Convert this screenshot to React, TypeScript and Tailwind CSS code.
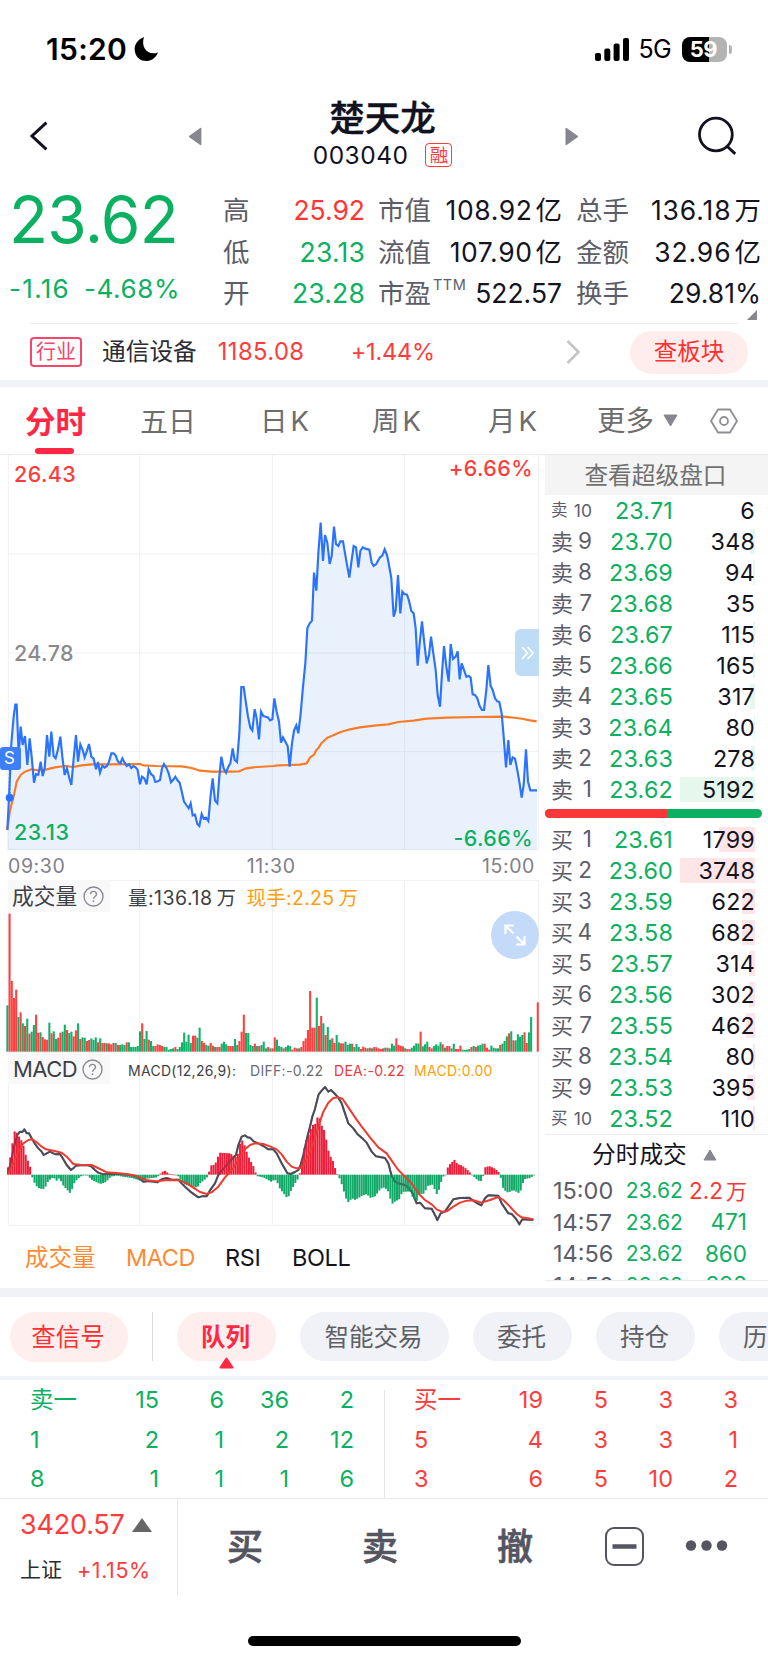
import React from "react";
import clsx from "clsx";

const MORNING_PRICE =
  "22,1140 27,1043 34,880 41,800 46,764 50,764 56,912 62,830 68,885 75,858 82,945 89,865 95,920 102,998 108,972 115,974 122,935 128,978 134,955 141,855 148,920 154,845 161,918 167,925 174,898 181,860 187,920 194,975 201,955 208,985 214,1005 221,925 228,855 234,935 241,883 248,900 254,922 261,902 267,882 274,920 281,926 288,958 294,936 300,968 307,947 314,953 321,948 327,935 334,910 341,910 347,917 354,935 361,940 367,925 374,938 380,948 387,943 394,954 400,948 407,952 413,960 420,1003 426,980 433,985 440,1003 446,958 453,972 460,978 466,996 473,994 480,990 486,955 492,942 499,953 506,970 513,997 519,990 526,980 532,990 539,998 546,1028 552,1055 559,1065 566,1075 572,1060 578,1096 585,1094 592,1122 598,1128 605,1092 611,1106 618,1103 625,1113 632,1035 638,985 645,1052 652,1060 658,980 664,920 671,955 678,968 685,950 691,940 698,895 704,930 711,936 718,850 724,711 731,711 738,760 744,800 751,833 757,841 764,778 770,805 777,868 783,785 790,798 797,800 804,802 810,811 817,808 823,745 830,785 837,815 843,878 849,862 856,875 863,888 869,950 876,880 882,842 889,826 895,850";
const AFTERNOON_PRICE =
  "902,790 909,710 916,640 922,535 929,520 936,512 942,368 949,422 955,310 962,218 969,333 975,255 982,278 989,342 995,318 1002,230 1008,282 1015,288 1021,274 1029,274 1035,310 1042,350 1048,383 1055,330 1061,288 1068,292 1075,352 1081,303 1088,292 1096,296 1108,299 1115,338 1121,348 1128,343 1140,322 1147,317 1154,298 1161,315 1167,345 1174,385 1181,500 1187,480 1194,375 1201,490 1207,425 1213,432 1221,434 1227,452 1234,483 1241,490 1247,535 1253,647 1260,570 1266,514 1273,580 1280,640 1287,615 1293,560 1300,610 1307,660 1313,735 1320,770 1326,670 1332,588 1339,650 1346,695 1352,582 1359,627 1367,620 1373,604 1379,688 1385,640 1392,660 1399,680 1406,678 1412,683 1418,733 1425,735 1432,745 1439,768 1446,780 1452,780 1459,720 1465,645 1472,708 1478,720 1485,745 1492,754 1498,756 1505,790 1511,860 1518,952 1525,870 1531,945 1538,922 1545,926 1551,955 1558,995 1565,1043 1571,1005 1578,898 1584,995 1591,1021 1611,1021";
const PRICE = `${MORNING_PRICE} ${AFTERNOON_PRICE}`;
const AVERAGE =
  "22,1140 30,1080 42,1035 50,995 62,975 75,965 95,958 115,961 140,958 165,952 195,948 220,951 245,946 275,943 330,943 420,942 430,946 470,948 545,949 575,954 600,962 635,965 690,965 718,964 735,956 760,952 820,948 835,946 870,945 900,944 920,940 930,923 942,914 949,900 956,893 964,880 982,863 1000,856 1020,847 1050,838 1080,832 1130,826 1165,823 1195,816 1240,812 1280,806 1340,803 1430,801 1510,800 1550,804 1570,807 1590,811 1610,814";

const VOLUME =
  "g139 r414 r212 r161 r186 g104 r118 g85 r77 g99 r54 g60 g80 r111 r57 g58 r44 r37 r36 g87 r55 g61 g38 r42 r57 g60 g81 r65 g56 g60 r46 r64 g85 r38 g43 g42 r32 r35 g40 g35 g43 r28 g40 r26 r26 g25 r25 r22 r26 g26 r20 g20 g22 g20 r28 g28 g14 g14 g14 g17 g61 r85 g38 g62 r36 g32 g17 r17 r22 r20 r17 g14 g14 g6 g8 g10 r14 g8 g14 g28 g57 g30 g51 g26 r48 r48 g42 g72 r32 r26 g20 g18 r26 r18 g14 r14 r14 g24 g30 g22 r17 r17 r17 g38 g20 r32 r60 r111 g56 g56 g20 g17 r24 g17 r17 g20 g30 g10 r14 g10 r10 r43 g36 g17 g14 r10 g14 g19 g17 r6 r12 r10 g10 r14 r32 r40 r65 r182 r72 r72 g162 r77 r107 g85 r50 g74 g36 r40 r26 g50 g28 r25 r25 g30 g20 g24 r24 g14 g23 g14 r8 r15 r12 g10 r12 g10 r14 r13 r10 r8 r10 g12 r12 g10 g24 g18 r40 r20 r18 r16 g10 r8 r8 g12 g18 g25 g24 r60 g16 g22 g30 r14 r10 g17 g22 g18 g28 r22 g12 r17 r17 g10 g24 r8 r8 r18 g6 g5 g6 g8 r14 g17 r14 g18 g20 g24 r24 r12 r6 g18 g12 g10 g10 r20 g24 g32 g46 r55 g61 r34 g34 g52 g45 g50 r58 r26 g58 g104 x0 x0 r148";

// x of the tick, value above or below the zero line
const MACD_BARS: [number, number][] = [
  [24, 22], [32, 58], [39, 106], [46, 140], [53, 118], [60, 112], [66, 98], [73, 80], [79, 50], [86, 38], [92, 18], [98, -14],
  [105, -27], [112, -38], [120, -42], [131, -43], [138, -34], [145, -18], [160, -8], [170, -18], [178, -10], [190, -33], [210, -55],
  [217, -42], [225, -20], [245, -3], [262, -2], [275, -15], [300, -28], [318, -22], [332, -6], [350, -3], [400, -11], [425, -20],
  [440, -12], [472, -8], [480, 2], [493, 13], [506, 3], [522, 0], [534, -4], [541, -14], [555, -30], [592, -39], [600, -26], [620, -10],
  [627, 8], [633, 28], [645, 30], [652, 50], [660, 66], [690, 64], [711, 50], [718, 85], [724, 108], [735, 85], [744, 56], [764, 18],
  [769, -4], [790, -8], [815, -22], [823, -14], [831, -20], [837, -38], [850, -55], [863, -72], [872, -50], [885, -26], [897, -8],
  [902, 20], [908, 62], [918, 100], [930, 130], [936, 150], [944, 148], [950, 165], [956, 183], [963, 148], [969, 145], [976, 120],
  [983, 82], [989, 56], [996, 50], [1002, 30], [1009, 8], [1015, -4], [1022, -18], [1030, -45], [1041, -80], [1048, -84], [1054, -70],
  [1066, -76], [1085, -64], [1101, -58], [1110, -70], [1125, -65], [1142, -42], [1154, -38], [1166, -52], [1173, -80], [1181, -92],
  [1187, -72], [1194, -82], [1207, -52], [1230, -50], [1240, -72], [1250, -80], [1258, -58], [1273, -57], [1282, -34], [1298, -30],
  [1311, -60], [1319, -40], [1326, -12], [1333, -1], [1338, 0], [1344, 24], [1352, 34], [1364, 45], [1372, 32], [1385, 28], [1400, 17],
  [1410, 6], [1420, -4], [1434, -18], [1446, -19], [1450, -2], [1455, 22], [1468, 26], [1485, 18], [1498, 6], [1505, -18], [1510, -44],
  [1524, -54], [1540, -46], [1558, -56], [1566, -40], [1571, -14], [1590, -10], [1602, -2],
];
const DIFF =
  "24,910 32,880 42,830 52,795 60,785 67,786 73,778 80,790 87,790 95,805 105,822 115,835 125,845 131,855 140,850 150,845 160,850 168,853 180,852 190,868 200,885 213,900 222,893 228,887 240,886 262,886 272,888 285,900 295,908 310,913 330,912 360,912 390,915 410,920 430,935 445,933 472,937 485,928 500,924 515,929 535,929 545,940 560,955 575,968 595,982 605,979 620,979 632,958 645,940 655,915 668,900 680,885 695,868 708,855 715,825 725,800 735,796 742,802 750,803 762,815 775,820 790,828 805,838 820,838 830,850 845,880 855,897 862,910 872,912 885,906 895,900 902,885 910,855 922,800 930,770 937,740 944,720 956,673 965,662 975,651 985,665 993,660 1005,672 1015,683 1025,700 1035,730 1045,760 1060,775 1072,792 1090,808 1100,818 1115,845 1128,859 1155,864 1165,880 1175,918 1185,935 1195,940 1215,945 1230,958 1238,970 1250,1000 1260,998 1275,1015 1295,1016 1305,1035 1312,1050 1322,1030 1335,1024 1345,1010 1360,988 1380,984 1407,983 1420,992 1432,1000 1444,1006 1455,985 1465,976 1495,977 1505,1000 1515,1015 1525,1030 1535,1032 1547,1045 1558,1063 1567,1048 1600,1050";
const DEA =
  "24,912 40,880 55,845 70,820 85,810 97,808 110,817 125,830 138,838 160,842 185,848 200,860 220,882 240,884 275,885 300,897 320,907 350,909 380,912 410,918 440,931 470,934 500,930 540,931 560,940 580,953 600,966 620,972 635,967 655,950 675,922 700,895 715,870 735,838 750,825 765,820 790,822 812,830 830,838 845,853 860,875 875,890 890,895 902,893 912,882 925,858 940,820 955,770 970,725 985,698 1000,684 1015,682 1028,687 1045,712 1065,742 1085,770 1110,802 1135,832 1160,850 1175,872 1195,900 1215,920 1235,940 1255,970 1275,990 1295,1003 1310,1018 1325,1025 1340,1024 1360,1010 1380,998 1400,992 1420,991 1445,998 1470,990 1495,981 1510,990 1530,1010 1550,1032 1565,1042 1600,1048";

const TICK = 6.63;

const macdAt = (x: number) => {
  for (let i = 1; i < MACD_BARS.length; i++) {
    const [x0, v0] = MACD_BARS[i - 1];
    const [x1, v1] = MACD_BARS[i];
    if (x <= x1) return v0 + ((v1 - v0) * (x - x0)) / (x1 - x0);
  }
  return 0;
};

const sells = [
  { label: "10", price: "23.71", vol: "6", bar: 0 },
  { label: "9", price: "23.70", vol: "348", bar: 5 },
  { label: "8", price: "23.69", vol: "94", bar: 2 },
  { label: "7", price: "23.68", vol: "35", bar: 0 },
  { label: "6", price: "23.67", vol: "115", bar: 2 },
  { label: "5", price: "23.66", vol: "165", bar: 2 },
  { label: "4", price: "23.65", vol: "317", bar: 5 },
  { label: "3", price: "23.64", vol: "80", bar: 1 },
  { label: "2", price: "23.63", vol: "278", bar: 4 },
  { label: "1", price: "23.62", vol: "5192", bar: 75 },
];

const buys = [
  { label: "1", price: "23.61", vol: "1799", bar: 36 },
  { label: "2", price: "23.60", vol: "3748", bar: 75 },
  { label: "3", price: "23.59", vol: "622", bar: 13 },
  { label: "4", price: "23.58", vol: "682", bar: 13 },
  { label: "5", price: "23.57", vol: "314", bar: 6 },
  { label: "6", price: "23.56", vol: "302", bar: 6 },
  { label: "7", price: "23.55", vol: "462", bar: 9 },
  { label: "8", price: "23.54", vol: "80", bar: 2 },
  { label: "9", price: "23.53", vol: "395", bar: 8 },
  { label: "10", price: "23.52", vol: "110", bar: 2 },
];

const trades = [
  { time: "15:00", price: "23.62", vol: "2.2", unit: "万", up: true },
  { time: "14:57", price: "23.62", vol: "471" },
  { time: "14:56", price: "23.62", vol: "860" },
  { time: "14:56", price: "23.62", vol: "892" },
];

const quoteRows = [
  { a: "高", av: "25.92", up: true, b: "市值", bv: "108.92", bu: "亿", c: "总手", cv: "136.18", cu: "万" },
  { a: "低", av: "23.13", b: "流值", bv: "107.90", bu: "亿", c: "金额", cv: "32.96", cu: "亿" },
  { a: "开", av: "23.28", b: "市盈", sup: "TTM", bv: "522.57", c: "换手", cv: "29.81%" },
];

const queueSell = [
  ["卖一", "15", "6", "36", "2"],
  ["1", "2", "1", "2", "12"],
  ["8", "1", "1", "1", "6"],
];
const queueBuy = [
  ["买一", "19", "5", "3", "3"],
  ["5", "4", "3", "3", "1"],
  ["3", "6", "5", "10", "2"],
];

function StatusBar() {
  return (
    <div className="flex h-[98px] items-center pl-[46px] pr-[36px] text-black">
      <span className="text-[30px] font-semibold tracking-[0.3px]">15:20</span>
      <svg className="ml-[7px]" width="25" height="26" viewBox="0 0 25 26">
        <path d="M10 1C3 4 0 9 .8 15 2 22 7 25.200 13 25c5-.3 9-3.500 11-8.500C14 20 6.500 12 10 1Z" fill="#000" />
      </svg>
      <div className="ml-auto flex items-center">
        <svg width="34" height="23" viewBox="0 0 34 23">
          <rect x="0" y="15" width="6" height="8" rx="2" />
          <rect x="9.300" y="10.500" width="6" height="12.500" rx="2" />
          <rect x="18.600" y="5.500" width="6" height="17.500" rx="2" />
          <rect x="28" y="0" width="6" height="23" rx="2" />
        </svg>
        <span className="ml-[10px] mt-[2px] text-[25px] tracking-[-0.7px]">5G</span>
        <div className="ml-[11px] flex h-[25px] w-[45px] items-center justify-center rounded-[8px] bg-[linear-gradient(90deg,#000_60%,#b3b3b3_60%)] pr-[2px] text-[22px] font-bold leading-none tracking-[-0.5px] text-white">
          59
        </div>
        <div className="ml-[2px] h-[9px] w-[3px] rounded-r-full bg-[#b3b3b3]" />
      </div>
    </div>
  );
}

function Header() {
  return (
    <div className="flex h-[92px] items-start px-[29px] text-[#11111f]">
      <svg className="mt-[22px]" width="20" height="32" viewBox="0 0 20 32" fill="none" stroke="#11111f" strokeWidth="3">
        <path d="M17.500 2.500 3 16l14.500 13.500" />
      </svg>
      <svg className="ml-[139px] mt-[29px]" width="14" height="19" viewBox="0 0 14 19">
        <path d="M13 1v17L1 9.500Z" fill="#86868e" stroke="#86868e" strokeLinejoin="round" />
      </svg>
      <div className="w-[366px] pr-[2px] text-center">
        <div className="text-[35.500px] font-medium leading-[42px] [-webkit-text-stroke:0.4px_#11111f]">楚天龙</div>
        <div className="mt-[1px] flex items-center justify-center leading-[28px]">
          <span className="text-[24.500px] tracking-[0.5px]">003040</span>
          <span className="ml-[17px] flex h-[24px] w-[27px] items-center justify-center rounded-[4px] border-[1.500px] border-[#ff3b3b] text-[18.500px] leading-none text-[#ff3b3b]">
            融
          </span>
        </div>
      </div>
      <svg className="mt-[29px]" width="14" height="19" viewBox="0 0 14 19">
        <path d="M1 1v17l12-8.500Z" fill="#86868e" stroke="#86868e" strokeLinejoin="round" />
      </svg>
      <svg className="ml-[118px] mt-[18px]" width="42" height="42" viewBox="0 0 42 42" fill="none" stroke="#11111f" strokeWidth="2.800">
        <circle cx="19" cy="18.500" r="16.500" />
        <path d="m30 30 8.500 8" />
      </svg>
    </div>
  );
}

function Quote() {
  return (
    <div className="relative flex h-[133px]">
      <div className="w-[223px] pl-[9px] text-[#0bb061]">
        <div className="mt-[-2px] text-[64px] leading-[64px] tracking-[-0.7px]">23.62</div>
        <div className="mt-[20px] flex gap-[14px] text-[26px] leading-[34px] tracking-[0.6px]">
          <span className="tracking-[1.300px]">-1.16</span>
          <span>-4.68%</span>
        </div>
      </div>
      <div>
        {quoteRows.map((r) => (
          <div key={r.a} className="grid h-[41.300px] w-[538px] grid-cols-[26px_116px_13px_54px_130px_14px_54px_131px] items-center text-[26.500px] leading-none">
            <span className="text-[#5d5d69]">{r.a}</span>
            <span className={clsx("text-right", r.up ? "text-[#ff3535]" : "text-[#0bb061] tracking-[0.2px]")}>{r.av}</span>
            <span />
            <span className="relative whitespace-nowrap text-[#5d5d69]">
              {r.b}
              {r.sup && <span className="absolute left-[55px] top-[-2px] text-[14.500px] tracking-[0.5px]">{r.sup}</span>}
            </span>
            <span className={clsx("whitespace-nowrap text-right text-[#14141f]", r.bu && "tracking-[0.6px]")}>
              {r.bv}
              {r.bu && <span className="ml-[3px] tracking-normal">{r.bu}</span>}
            </span>
            <span />
            <span className="whitespace-nowrap text-[#5d5d69]">{r.c}</span>
            <span className={clsx("whitespace-nowrap text-right text-[#14141f]", r.cu && "tracking-[0.9px]")}>
              {r.cv}
              {r.cu && <span className="ml-[3px] tracking-normal">{r.cu}</span>}
            </span>
          </div>
        ))}
      </div>
      <svg className="absolute bottom-[3px] right-[11px]" width="10" height="10">
        <path d="M10 0v10H0Z" fill="#86868e" />
      </svg>
    </div>
  );
}

function Industry() {
  return (
    <div className="mx-[30px] flex h-[57px] items-center border-t border-[#ececef]">
      <span className="flex h-[30px] w-[52px] items-center justify-center rounded-[4px] border-2 border-[#f5466b] text-[20px] leading-none text-[#f5466b]">
        行业
      </span>
      <span className="ml-[20px] text-[23.700px] text-[#2b2b33]">通信设备</span>
      <span className="ml-[21px] w-[133px] text-[23.800px] tracking-[0.4px] text-[#ff3b3b]">1185.08</span>
      <span className="text-[23.500px] tracking-[-0.2px] text-[#ff3b3b]">+1.44%</span>
      <svg className="ml-auto mr-[50px]" width="14" height="24" viewBox="0 0 14 24" fill="none" stroke="#c2c2c6" strokeWidth="2.500">
        <path d="m1.500 1 11 11-11 11" />
      </svg>
      <span className="mr-[-10px] flex h-[43px] w-[118px] items-center justify-center rounded-full bg-[#ffeded] text-[23.500px] text-[#ff3030]">
        查板块
      </span>
    </div>
  );
}

function PeriodTabs() {
  return (
    <div className="flex h-[68px] items-center border-b border-[#e9e9eb] text-[27.500px] text-[#6d6d6d]">
      <div className="relative ml-[25px] flex h-full w-[115px] items-center pt-[2px] text-[30.500px] font-bold text-[#ff2743]">
        分时
        <span className="absolute bottom-0 left-[10px] h-[6px] w-[39px] rounded-full bg-[#ff2743]" />
      </div>
      <span className="w-[120px] pt-[2px] text-[28px]">五日</span>
      <span className="w-[112px] pt-[2px]">日<span className="ml-[3px]">K</span></span>
      <span className="w-[116px] pt-[2px]">周<span className="ml-[3px]">K</span></span>
      <span className="w-[109px] pt-[2px]">月<span className="ml-[3px]">K</span></span>
      <span className="pt-[2px] text-[28.500px]">更多</span>
      <svg className="ml-[9px]" width="15" height="13" viewBox="0 0 15 13">
        <path d="M1 1h13L7.500 12Z" fill="#86868e" stroke="#86868e" strokeLinejoin="round" />
      </svg>
      <svg className="ml-[32px]" width="28" height="28" viewBox="0 0 28 28" fill="none" stroke="#8e8e94" strokeWidth="1.800">
        <path d="M8 2.500h12L27 14l-7 11.500H8L1 14Z" strokeLinejoin="round" />
        <circle cx="14" cy="14" r="4" />
      </svg>
    </div>
  );
}

function Grid({ top, bottom, rows }: { top: number; bottom: number; rows: number[] }) {
  return (
    <g stroke="#f1f1f3" strokeWidth="3">
      {[25, 418, 817, 1213, 1615].map((x) => (
        <path key={x} d={`M${x} ${top}V${bottom}`} />
      ))}
      {rows.map((y) => (
        <path key={y} d={`M24 ${y}H1616`} />
      ))}
    </g>
  );
}

function PriceChart() {
  return (
    <div className="relative h-[395px]">
      <svg className="absolute inset-0" width="540" height="395" viewBox="0 15 1620 1185" fill="none">
        <Grid top={15} bottom={1200} rows={[312, 609, 905, 1199]} />
        <polygon points={`${PRICE} 1611,1200 22,1200`} fill="#2b73f0" fillOpacity="0.1" />
        <polyline points={AVERAGE} stroke="#fb7a26" strokeWidth="6.500" strokeLinejoin="round" />
        <polyline points={PRICE} stroke="#2b73ff" strokeWidth="6.500" strokeLinejoin="miter" />
        <path d="M29 960v80" stroke="#2b73ff" strokeWidth="5" strokeDasharray="5 6" />
        <circle cx="29" cy="1043" r="12" fill="#2b73ff" />
      </svg>
      <div className="absolute inset-0 flex justify-between pl-[14px] pr-[7px] text-[21.500px] font-[450] leading-[26px] tracking-[0.4px]">
        <div className="flex flex-col justify-between pb-[5px] pt-[6px]">
          <span className="text-[#ff3b3b]">26.43</span>
          <span className="text-[#8a8a8a]">24.78</span>
          <span className="text-[#0bb061]">23.13</span>
        </div>
        <div className="flex flex-col items-end justify-between">
          <span className="text-[#ff3b3b]">+6.66%</span>
          <span className="mb-[-1px] text-[#0bb061]">-6.66%</span>
        </div>
      </div>
      <span className="absolute left-0 top-[292px] flex h-[23px] w-[21px] items-center justify-center rounded-[3px] bg-[#3c7ff6] pr-[2px] text-[17px] leading-none text-white">
        S
      </span>
      <span className="absolute left-[515px] top-[174px] flex h-[47px] w-[24px] items-center justify-center rounded-l-[6px] bg-[#bfdcf6]">
        <svg width="13" height="14" viewBox="0 0 13 14" fill="none" stroke="#fff" strokeWidth="1.700">
          <path d="m1 1 5.500 6L1 13M6.500 1l5.500 6-5.500 6" />
        </svg>
      </span>
    </div>
  );
}

function Help() {
  return (
    <svg width="21" height="21" viewBox="0 0 21 21" fill="none" stroke="#8b8b95" strokeWidth="1.400">
      <circle cx="10.500" cy="10.500" r="9.500" />
      <path d="M7.500 8.300c0-3.900 6-3.900 6 0 0 2.200-3 2.300-3 4.500M10.500 14.300v1.800" />
    </svg>
  );
}

function VolumeChart() {
  return (
    <div className="relative h-[174px]">
      <svg className="absolute inset-0" width="540" height="174" viewBox="0 30 1620 522">
        <Grid top={31} bottom={552} rows={[31, 547]} />
        {VOLUME.split(" ").map((v, i) => {
          const h = Number(v.slice(1));
          return (
            <rect key={i} x={19 + i * TICK} y={545 - h} width="6.200" height={h} fill={v[0] === "r" ? "#ff4040" : "#10b168"} />
          );
        })}
      </svg>
      <div className="relative flex h-[32px] items-center">
        <div className="ml-[8px] flex h-full w-[102px] items-center gap-[6px] bg-[#f8f8f8] pl-[4px] text-[21.700px] text-[#3f3f46]">
          成交量
          <Help />
        </div>
        <span className="ml-[18px] mt-[6px] whitespace-nowrap text-[19.500px] tracking-[0.5px] text-[#3f3f46]">
          量:136.18<span className="ml-[4px]">万</span>
        </span>
        <span className="ml-[10px] mt-[6px] whitespace-nowrap text-[19.500px] tracking-[0.3px] text-[#ff9d0a]">
          现手:2.25<span className="ml-[4px]">万</span>
        </span>
      </div>
      <span className="absolute left-[491px] top-[31px] flex size-[48px] items-center justify-center rounded-full bg-[#c3daf8]">
        <svg width="22" height="22" viewBox="0 0 22 22" fill="none" stroke="#fff" strokeWidth="2.200">
          <path d="M1.500 10V1.500H10M2 2l7.500 7.500M12 20.500h8.500V12M20 20l-7.500-7.500" />
        </svg>
      </span>
    </div>
  );
}

function MacdChart() {
  const ticks = Array.from({ length: 239 }, (_, i) => 24 + i * TICK);
  return (
    <div className="relative h-[172px]">
      <svg className="absolute inset-0" width="540" height="172" viewBox="0 552 1620 516" fill="none">
        <Grid top={552} bottom={1066} rows={[1066]} />
        <polyline points={DIFF} stroke="#4c4c58" strokeWidth="6" strokeLinejoin="round" />
        {ticks.map((x) => {
          const v = macdAt(x);
          return (
            <rect
              key={x}
              x={x - 3}
              y={v > 0 ? 914 - v : 914}
              width="6.100"
              height={Math.max(Math.abs(v), 2)}
              fill={v > 0 ? "#ee1c38" : "#12a968"}
            />
          );
        })}
        <polyline points={DIFF} stroke="#4c4c58" strokeOpacity="0.450" strokeWidth="6" strokeLinejoin="round" />
        <polyline points={DEA} stroke="#f03a30" strokeWidth="6" strokeLinejoin="round" />
      </svg>
      <div className="relative flex h-[30px] items-center whitespace-nowrap text-[14px] tracking-[0.3px]">
        <div className="ml-[8px] flex h-full w-[102px] items-center gap-[5px] bg-[#f8f8f8] pl-[5px] text-[22px] tracking-[-0.5px] text-[#3f3f46]">
          MACD
          <Help />
        </div>
        <span className="ml-[18px] w-[122px] pt-[2px] text-[#3f3f46]">MACD(12,26,9):</span>
        <span className="w-[84px] pt-[2px] text-[#6b6b75]">DIFF:-0.22</span>
        <span className="w-[80px] pt-[2px] text-[#f0363a]">DEA:-0.22</span>
        <span className="pt-[2px] text-[#ff9d0a]">MACD:0.00</span>
      </div>
    </div>
  );
}

function BookRow({ side, row }: { side: string; row: { label: string; price: string; vol: string; bar: number } }) {
  const small = row.label === "10";
  return (
    <div className="flex h-[31px] items-center leading-none">
      <span className={clsx("flex w-[41px] items-center justify-between text-[#5d5d69]", small ? "text-[16.500px]" : "text-[22px]")}>
        <span>{side}</span>
        <span className={clsx(small ? "text-[17.500px]" : "text-[22.500px]")}>{row.label}</span>
      </span>
      <span className="w-[81px] text-right text-[23.300px] tracking-[0.2px] text-[#0bb061]">{row.price}</span>
      <span className="relative flex h-[25px] w-[82px] items-center justify-end">
        <span
          className={clsx("absolute inset-y-0 right-0", side === "卖" ? "bg-[#e6f7ee]" : "bg-[#ffe4e8]")}
          style={{ width: row.bar }}
        />
        <span className="relative text-[23.300px] tracking-[0.2px] text-[#14141f]">{row.vol}</span>
      </span>
    </div>
  );
}

function OrderBook() {
  return (
    <div className="ml-[5px] flex w-[223px] flex-col">
      <div className="flex h-[40px] items-center justify-center bg-[#f4f4f4] pr-[2px] pt-[1px] text-[23.700px] text-[#707070]">查看超级盘口</div>
      <div className="pl-[6px]">
        {sells.map((r) => (
          <BookRow key={r.label} side="卖" row={r} />
        ))}
      </div>
      <div className="mb-[6px] mt-[4px] flex h-[9px] w-[217px] overflow-hidden rounded-full bg-[#0bb061]">
        <div className="w-[122px] bg-[#fd3737]" />
      </div>
      <div className="pl-[6px]">
        {buys.map((r) => (
          <BookRow key={r.label} side="买" row={r} />
        ))}
      </div>
      <div className="flex h-[40px] items-center border-t border-[#ececef] pl-[47px] text-[23.700px] text-[#14141f]">
        分时成交
        <svg className="ml-[16px]" width="14" height="12" viewBox="0 0 14 12">
          <path d="M7 1 13 11H1Z" fill="#86868e" stroke="#86868e" strokeLinejoin="round" />
        </svg>
      </div>
      <div className="h-[107px] overflow-hidden border-b border-[#ececef] pl-[8px] pt-px">
        {trades.map((t, i) => (
          <div key={i} className="flex h-[31.500px] items-center leading-none">
            <span className="w-[64px] text-[23.500px] text-[#5d5d69]">{t.time}</span>
            <span className="w-[66px] text-right text-[21px] tracking-[0.1px] text-[#0bb061]">{t.price}</span>
            <span className={clsx("w-[64px] whitespace-nowrap text-right text-[22.500px]", t.up ? "text-[#ff3535]" : "text-[#0bb061]")}>
              {t.vol}
              {t.unit && <span className="ml-[3px] text-[21px]">{t.unit}</span>}
            </span>
          </div>
        ))}
      </div>
    </div>
  );
}

function Chips() {
  return (
    <div className="flex h-[79px] items-start overflow-hidden pl-[10px] pt-[15px] text-[24.500px] text-[#5f5f66]">
      <span className="flex h-[50px] w-[118px] shrink-0 items-center justify-center rounded-full bg-[#ffeeee] pr-[2px] pt-px text-[#ff3030]">查信号</span>
      <span className="ml-[24px] mr-[24px] h-[49px] w-px shrink-0 bg-[#d9d9dd]" />
      <span className="relative flex h-[49px] w-[99px] shrink-0 items-center justify-center rounded-full bg-[#ffeeee] pr-[2px] pt-px font-bold text-[#ff2743]">
        队列
        <svg className="absolute left-[42px] top-[45px]" width="15" height="12" viewBox="0 0 15 12">
          <path d="M7.500 1.500 13.500 10.500h-12Z" fill="#ff2743" stroke="#ff2743" strokeWidth="2" strokeLinejoin="round" />
        </svg>
      </span>
      <span className="ml-[24px] flex h-[49px] w-[149px] shrink-0 items-center justify-center rounded-full bg-[#f1f2f7] pr-[2px] pt-px">智能交易</span>
      <span className="ml-[24px] flex h-[49px] w-[99px] shrink-0 items-center justify-center rounded-full bg-[#f1f2f7] pr-[2px] pt-px">委托</span>
      <span className="ml-[24px] flex h-[49px] w-[99px] shrink-0 items-center justify-center rounded-full bg-[#f1f2f7] pr-[2px] pt-px">持仓</span>
      <span className="ml-[24px] flex h-[49px] w-[99px] shrink-0 items-center justify-center rounded-full bg-[#f1f2f7] pr-[2px] pt-px">历史</span>
    </div>
  );
}

function Queue() {
  return (
    <div className="flex h-[118px] text-[23.500px] leading-none">
      <div className="w-[384px] pl-[30px] text-[#0bb061]">
        {queueSell.map((row, i) => (
          <div key={i} className="grid h-[39.400px] grid-cols-[60px_69px_65px_65px_65px] items-center pt-[1px] text-right">
            {row.map((c, j) => (
              <span key={j} className={clsx(j === 0 && "text-left")}>{c}</span>
            ))}
          </div>
        ))}
      </div>
      <div className="mt-[10px] w-px bg-[#e6e6ea]" />
      <div className="w-[383px] pl-[29px] text-[#ff3b3b]">
        {queueBuy.map((row, i) => (
          <div key={i} className="grid h-[39.400px] grid-cols-[60px_69px_65px_65px_65px] items-center pt-[1px] text-right">
            {row.map((c, j) => (
              <span key={j} className={clsx(j === 0 && "text-left")}>{c}</span>
            ))}
          </div>
        ))}
      </div>
    </div>
  );
}

function BottomBar() {
  return (
    <div className="flex h-[97px] border-t border-[#e9e9ec]">
      <div className="w-[178px] border-r border-[#e9e9ec] pl-[20px]">
        <div className="mt-[10px] flex items-center text-[27px] leading-[32px] tracking-[-0.2px] text-[#ff3b3b]">
          3420.57
          <svg className="ml-[7px]" width="20" height="14" viewBox="0 0 20 14">
            <path d="M10 0 20 14H0Z" fill="#666" />
          </svg>
        </div>
        <div className="mt-[15px] flex items-center text-[21px] leading-[28px] text-[#2b2b33]">
          上证<span className="ml-[15px] text-[21.500px] tracking-[0.6px] text-[#ff3b3b]">+1.15%</span>
        </div>
      </div>
      <div className="flex h-full items-center text-[36px] font-medium text-[#555562] [-webkit-text-stroke:0.7px_#555562]">
        <span className="ml-[49px] w-[135px]">买</span>
        <span className="w-[135px]">卖</span>
        <span className="w-[108px]">撤</span>
        <svg className="mb-[2px]" width="39" height="39" viewBox="0 0 39 39" fill="none" stroke="#555562">
          <rect x="1" y="1" width="37" height="37" rx="8" strokeWidth="2" />
          <path d="M7.500 19.500h24" strokeWidth="4.500" />
        </svg>
        <svg className="mb-[3px] ml-[41px]" width="43" height="12" viewBox="0 0 43 12" fill="#555562">
          <circle cx="6" cy="5.500" r="5.200" />
          <circle cx="21.500" cy="5.500" r="5.200" />
          <circle cx="37" cy="5.500" r="5.200" />
        </svg>
      </div>
    </div>
  );
}

export default function App() {
  return (
    <div className="flex h-[1663px] w-[768px] flex-col overflow-hidden bg-white font-[Inter,'Noto_Sans_CJK_SC',sans-serif]">
      <StatusBar />
      <Header />
      <Quote />
      <Industry />
      <div className="h-[7px] bg-[#f1f2f6]" />
      <PeriodTabs />
      <div className="flex h-[833px]">
        <div className="w-[540px]">
          <PriceChart />
          <div className="flex h-[30px] items-center justify-between pl-[8px] pr-[5px] pt-[4px] text-[19.500px] tracking-[0.6px] text-[#808089]">
            <span>09:30</span>
            <span className="mr-[5px]">11:30</span>
            <span>15:00</span>
          </div>
          <VolumeChart />
          <MacdChart />
          <div className="flex h-[62px] items-center pl-[25px] pt-[1px] text-[23.500px] text-[#14141f]">
            <span className="w-[101px] text-[#ff8a33]">成交量</span>
            <span className="w-[99px] tracking-[-0.4px] text-[#ff8a33]">MACD</span>
            <span className="w-[67px] tracking-[-0.3px]">RSI</span>
            <span className="tracking-[-0.4px]">BOLL</span>
          </div>
        </div>
        <OrderBook />
      </div>
      <div className="h-[9px] shrink-0 bg-[#f1f2f7]" />
      <Chips />
      <div className="h-[4px] shrink-0 bg-[#f1f2f7]" />
      <Queue />
      <BottomBar />
      <div className="mx-auto mt-[41px] h-[10px] w-[273px] rounded-full bg-black" />
    </div>
  );
}
